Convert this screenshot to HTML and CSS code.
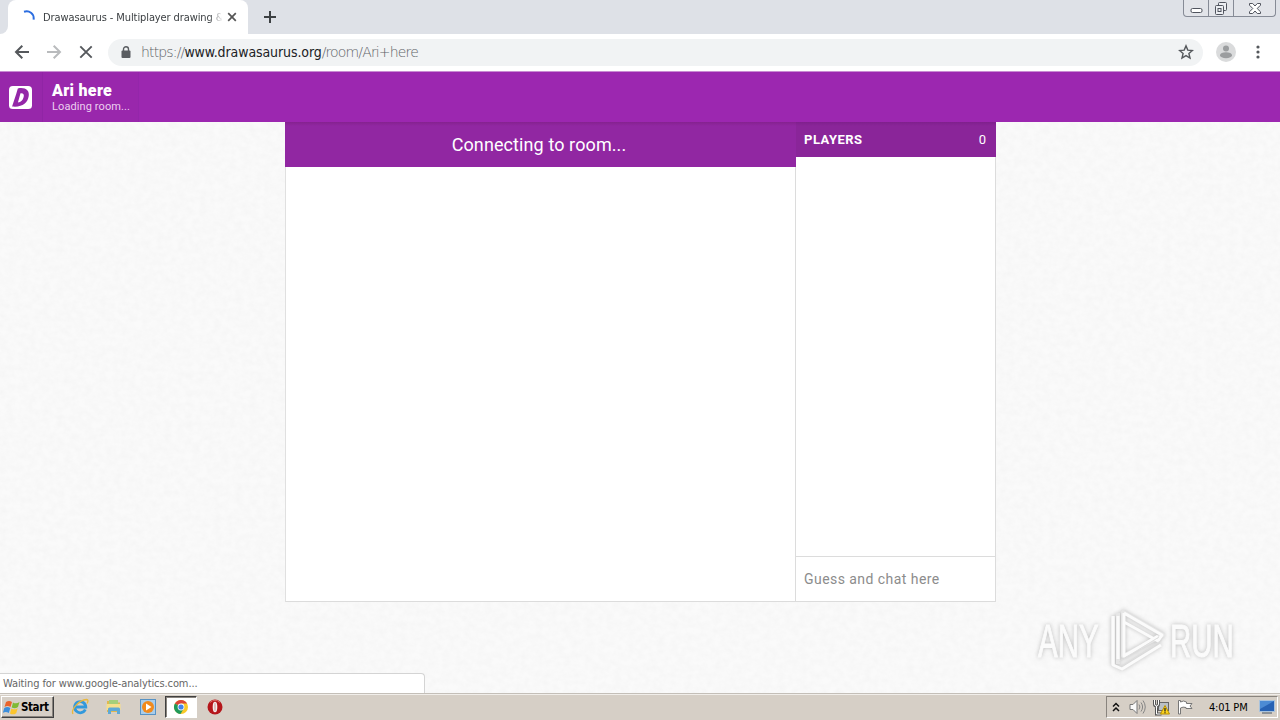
FILE: index.html
```
<!DOCTYPE html>
<html lang="en">
<head>
  <meta charset="utf-8">
  <title>Drawasaurus - Multiplayer drawing &amp; guessing game</title>
  <link rel="stylesheet" href="styles.css">
</head>
<body>
  <div class="tabstrip">
    <div class="prev_tab"></div>
    <div class="tab">
      <svg class="spinner" width="14" height="14" viewBox="0 0 14 14"><path d="M2 1.800C7 .2 12.400 3.200 11.600 9.600" fill="none" stroke="#2b6de0" stroke-width="2"/></svg>
      <span class="tab_title">Drawasaurus - Multiplayer drawing &amp;</span>
      <svg class="tab_close" width="10" height="10" viewBox="0 0 10 10"><path d="M1.200 1.200l7.600 7.600M8.800 1.200L1.200 8.800" stroke="#555" stroke-width="1.700"/></svg>
    </div>
    <svg class="new_tab" width="14" height="14" viewBox="0 0 14 14"><path d="M7 1v12M1 7h12" stroke="#3c4043" stroke-width="2"/></svg>
    <div class="win_buttons">
      <span class="win_btn min"><svg width="13" height="15" viewBox="0 0 13 15"><rect x="1" y="7.500" width="11" height="4" rx="1.500" fill="#fff" stroke="#50545e"/></svg></span>
      <span class="win_btn max"><svg width="15" height="15" viewBox="0 0 15 15"><g fill="#eceef2" stroke="#50545e"><rect x="4.500" y="1.500" width="8" height="8" rx="1"/><rect x="1.500" y="4.500" width="8" height="9" rx="1"/><rect x="4" y="7.500" width="3" height="3"/></g></svg></span>
      <span class="win_btn close"><svg width="14" height="13" viewBox="0 0 14 13"><path d="M1.500 1.500h3.200L7 4l2.300-2.500h3.200v1.700L9.200 6.500l3.300 3.300v1.700H9.300L7 9l-2.300 2.500H1.500V9.800l3.300-3.300-3.300-3.300z" fill="#fff" stroke="#50545e"/></svg></span>
    </div>
  </div>

  <div class="toolbar">
    <svg class="nav" width="16" height="16" viewBox="0 0 16 16"><path d="M15 8H2.200M8.300 1.700L2 8l6.300 6.300" fill="none" stroke="#55585c" stroke-width="2"/></svg>
    <svg class="nav" width="16" height="16" viewBox="0 0 16 16"><path d="M1 8h12.800M7.700 1.700L14 8l-6.300 6.300" fill="none" stroke="#b9bbbd" stroke-width="2"/></svg>
    <svg class="nav" width="16" height="16" viewBox="0 0 16 16"><path d="M2.300 2.300l11.400 11.400M13.700 2.300L2.300 13.700" stroke="#55585c" stroke-width="1.900"/></svg>
    <div class="omnibox">
      <svg class="lock" width="10" height="13" viewBox="0 0 10 13"><rect x=".5" y="4.500" width="9" height="7.500" rx="1" fill="#5a5d61"/><path d="M2.500 5V3.200a2.500 2.500 0 0 1 5 0V5" fill="none" stroke="#5a5d61" stroke-width="1.400"/></svg>
      <span class="url">https://<b>www.drawasaurus.org</b>/room/Ari+here</span>
      <svg class="star" width="16" height="16" viewBox="0 0 16 16"><path d="M8 1.900l1.800 4.200 4.600.4-3.500 3 1.100 4.500L8 11.600 4 14l1.100-4.500-3.500-3 4.600-.4z" fill="none" stroke="#55585c" stroke-width="1.400"/></svg>
    </div>
    <svg class="avatar" width="20" height="20" viewBox="0 0 20 20"><circle cx="10" cy="10" r="10" fill="#dadbdc"/><circle cx="10" cy="6.600" r="3" fill="#9b9d9f"/><ellipse cx="10" cy="13.200" rx="6" ry="3" fill="#9b9d9f"/></svg>
    <svg class="dots" width="4" height="14" viewBox="0 0 4 14"><g fill="#55585c"><circle cx="2" cy="2" r="1.600"/><circle cx="2" cy="7" r="1.600"/><circle cx="2" cy="12" r="1.600"/></g></svg>
  </div>

  <div class="header">
    <div class="logo">
      <svg width="23" height="23" viewBox="0 0 24 24"><rect width="24" height="24" rx="4" fill="#fff"/><path d="M9.200 2.500C17 1 21.600 4.400 20.600 10.500 19.500 18 13.500 22.500 3.200 21.400L5.100 15.600 7.600 8.200z" fill="#9427a8"/><path d="M12 7.500C15 7.200 16 8.800 15.300 11.500 14.500 14.800 12.500 16.800 9.300 17.200z" fill="#fff"/></svg>
    </div>
    <div class="room">
      <div class="room_name">Ari here</div>
      <div class="room_status">Loading room...</div>
    </div>
  </div>

  <div class="page">
    <!-- paper grain behind the game -->
    <svg class="paper" width="1280" height="571">
      <filter id="grain" x="0" y="0" width="100%" height="100%">
        <feTurbulence type="fractalNoise" baseFrequency=".14 .16" numOctaves="4" seed="6" result="n"/>
        <feColorMatrix in="n" type="matrix" values="0 0 0 0 .4  0 0 0 0 .4  0 0 0 0 .4  .09 0 0 0 -.025"/>
      </filter>
      <rect width="1280" height="571" filter="url(#grain)"/>
    </svg>
    <div class="game">
      <div class="board">
        <div class="board_title">Connecting to room...</div>
      </div>
      <div class="side">
        <div class="players"><span class="players_label">PLAYERS</span><span class="players_count">0</span></div>
        <div class="chat"></div>
        <div class="guess">Guess and chat here</div>
      </div>
    </div>

    <div class="watermark">
      <span class="any">ANY</span>
      <svg width="62" height="66" viewBox="0 0 62 66">
        <g fill="none" stroke-linejoin="round">
          <path d="M9 8v49M14 5v51M19 4v44L59 27z" stroke="#e6e6e6" stroke-width="4"/>
          <path d="M9 8v49l9 4 39-24M14 8v43M20 5v43l34-20M20 5l38 22-4 6-34-19" stroke="#fbfbfb" stroke-width="3"/>
          <path d="M15 54l40-25M18 58l40-26" stroke="#dedede" stroke-width="1"/>
        </g>
      </svg>
      <span class="run">RUN</span>
    </div>
    <div class="status">Waiting for www.google-analytics.com...</div>
  </div>

  <div class="taskbar">
    <div class="start">
      <svg width="18" height="17" viewBox="0 0 18 17"><path d="M3 3c2-1.500 4-1.500 6 0L7.500 8c-2-1.300-4-1.300-6 0z" fill="#e9642c"/><path d="M10 3.500c2 1.200 4.200 1.200 6.500-.5L15 8c-2.200 1.500-4.300 1.500-6.300.4z" fill="#7fba35"/><path d="M1.300 9c2-1.300 4-1.300 6 0l-1.500 5c-2-1.300-4-1.300-6 0z" fill="#3c8edb"/><path d="M8.400 9.500c2 1.200 4 1.200 6.300-.3l-1.500 5c-2.200 1.500-4.200 1.500-6.200.3z" fill="#fbc52d"/></svg>
      <span>Start</span>
    </div>
    <div class="task">
      <svg width="18" height="18" viewBox="0 0 18 18"><path d="M14.300 11.500A5.600 5.600 0 1 1 14.800 9H5" fill="none" stroke="#3299dc" stroke-width="2.800"/><path d="M2 16C-.5 12 8 2 15.500 1.500c2 0 1.800 2 .5 4" fill="none" stroke="#e9b73c" stroke-width="1.300"/></svg>
    </div>
    <div class="task">
      <svg width="18" height="18" viewBox="0 0 18 18"><path d="M2 3h5l1 1.500h7V14H2z" fill="#e0b850"/><path d="M4 2h9v5H4z" fill="#a5cf7a"/><path d="M1.500 6h14v6h-14z" fill="#f6df8c"/><path d="M3 16v-5q0-1.500 1.500-1.500h9Q15 9.500 15 11v5h-3v-3H6v3z" fill="#5fa9d6"/></svg>
    </div>
    <div class="task">
      <svg width="18" height="18" viewBox="0 0 18 18"><rect x="1.500" y="1.500" width="15" height="15" fill="#a9cdea" stroke="#5792c4"/><circle cx="9" cy="9" r="6" fill="#f18a1c"/><path d="M7 5.500l5.500 3.500L7 12.500z" fill="#fff"/></svg>
    </div>
    <div class="task active">
      <svg width="16" height="16" viewBox="0 0 16 16"><circle cx="8" cy="8" r="7" fill="#f9c928"/><path d="M8 8L1.900 4.500A7 7 0 0 1 14.100 4.500H8z" fill="#dc4437"/><path d="M8 8L1.900 4.500A7 7 0 0 0 7.500 15l3-5z" fill="#20995a"/><circle cx="8" cy="8" r="3.400" fill="#fff"/><circle cx="8" cy="8" r="2.600" fill="#4383ea"/></svg>
    </div>
    <div class="task">
      <svg width="16" height="16" viewBox="0 0 16 16"><circle cx="8" cy="8" r="7.500" fill="#b5161b"/><path d="M3 3.500Q8-1 13 3.500" fill="none" stroke="#dc6a65"/><ellipse cx="8" cy="8" rx="2.300" ry="5.300" fill="#f5eeee"/><ellipse cx="8" cy="8" rx=".8" ry="4.400" fill="#d9b4b1"/></svg>
    </div>
    <div class="tray">
      <svg width="8" height="11" viewBox="0 0 8 11"><path d="M1 4.500l3-3 3 3M1 9l3-3 3 3" fill="none" stroke="#111" stroke-width="1.500"/></svg>
      <svg class="sound" width="17" height="16" viewBox="0 0 17 16"><path d="M1 5.500h3l4-4v13l-4-4H1z" fill="#f9f9f9" stroke="#777"/><path d="M10 5.500q1.800 2.500 0 5M12 3.500q3.200 4.500 0 9M14 1.500q4.500 6.500 0 13" fill="none" stroke="#858585"/></svg>
      <svg class="net" width="18" height="17" viewBox="0 0 18 17"><rect x="5.500" y="3.500" width="10" height="8" fill="#bac0c5" stroke="#666"/><path d="M1.500 1v4q0 2 2 2t2-2V1M3.500 7v8h5" fill="none" stroke="#555" stroke-width="3"/><path d="M1.500 1v4q0 2 2 2t2-2V1M3.500 7v8h5" fill="none" stroke="#fff"/><path d="M12 6.500l4.500 8.500h-9z" fill="#ffd51c" stroke="#b99000"/><path d="M12 9v3.500M12 13.200v1" stroke="#222" stroke-width="1.300"/></svg>
      <svg class="flag" width="17" height="16" viewBox="0 0 17 16"><path d="M1.500 15V1.500h2V3q3-2 6 0v1.500h5.500l-2 2.500 2 2.500h-6V8.500q-3-1-5.500.5v6z" fill="#fff" stroke="#777"/></svg>
      <span class="clock">4:01 PM</span>
      <svg class="desk" width="16" height="14" viewBox="0 0 16 14"><rect x=".5" y=".5" width="15" height="11" fill="#2762b4" stroke="#a9c3dd"/><path d="M1 1h14L1 9z" fill="#4c8bd4"/><path d="M3 13h10" stroke="#456"/></svg>
    </div>
  </div>
</body>
</html>
```
FILE: styles.css
```
* {
  box-sizing: border-box;
}
body {
  margin: 0;
  width: 1280px;
  height: 720px;
  overflow: hidden;
  display: flex;
  flex-direction: column;
  font-family: "DejaVu Sans Condensed", "DejaVu Sans", sans-serif;
  font-size: 11px;
}
svg {
  display: block;
  flex: none;
}

/* browser */
.tabstrip {
  height: 34px;
  background: #dee1e7;
  display: flex;
  flex: none;
}
.prev_tab {
  width: 8px;
  background: #dee1e7;
  border-bottom-right-radius: 8px;
  box-shadow: 0 8px 0 #fff;
}
.tab {
  width: 240px;
  height: 34px;
  background: #fff;
  border-radius: 8px 8px 0 0;
  display: flex;
  align-items: center;
  padding-left: 14px;
}
.spinner {
  margin-top: -1px;
}
.tab_title {
  width: 179px;
  margin-left: 7px;
  white-space: nowrap;
  color: #3c4043;
  letter-spacing: -0.1px;
  -webkit-mask-image: linear-gradient(90deg, #000 166px, transparent 180px);
}
.tab_close {
  margin-left: 5px;
}
.new_tab {
  margin: 10px 0 0 15px;
}
.win_buttons {
  display: flex;
  height: 17px;
  margin: 0 4px 0 auto;
  border: 1px solid #868b96;
  border-top: 0;
  border-radius: 0 0 4px 4px;
  background: #e2e4e9;
}
.win_btn {
  display: flex;
  justify-content: center;
  align-items: center;
}
.min {
  width: 24px;
}
.max {
  width: 26px;
  border-left: 1px solid #868b96;
  border-right: 1px solid #868b96;
}
.close {
  width: 41px;
}
.toolbar {
  height: 37px;
  flex: none;
  display: flex;
  align-items: center;
  padding: 0 20px 0 14px;
  background: #fff;
}
.toolbar > svg {
  position: relative;
  top: -1px;
}
.nav {
  margin-right: 16px;
}
.omnibox {
  width: 1095px;
  height: 27px;
  margin: -1px 0 0 -2px;
  border-radius: 14px;
  background: #f1f3f4;
  display: flex;
  align-items: center;
  padding: 0 9px 0 13px;
}
.url {
  margin-left: 10px;
  font-family: "DejaVu Sans Light", "DejaVu Sans", sans-serif;
  font-weight: 200;
  font-size: 14px;
  color: #5f6368;
  letter-spacing: -0.85px;
}
.url b {
  font-family: "DejaVu Sans Condensed", sans-serif;
  font-weight: normal;
  color: #202124;
  letter-spacing: -0.1px;
}
.star {
  margin-left: auto;
}
.avatar {
  margin-left: 13px;
}
.dots {
  margin-left: auto;
}

/* room header */
.header {
  height: 51px;
  flex: none;
  display: flex;
  background: #9c27b0;
  border-top: 1px solid #c98bd3;
  color: #fff;
}
.logo {
  width: 43px;
  padding: 14px 0 0 9px;
  background: #9727aa;
  border-right: 1px solid #9025a5;
}
.room {
  width: 96px;
  padding: 10px 0 0 9px;
  border-right: 1px solid #9426aa;
  background: #9927ac;
  white-space: nowrap;
}
.room_name {
  font: 900 16px/18px Roboto, sans-serif;
  letter-spacing: 0.3px;
}
.room_status {
  font: 11px/13px Roboto, sans-serif;
  color: #ecd0f0;
  letter-spacing: 0.1px;
}

/* game */
.page {
  position: relative;
  height: 571px;
  flex: none;
  background: #fafafa;
}
.paper {
  position: absolute;
  left: 0;
  top: 0;
}
.game {
  position: relative;
  width: 711px;
  height: 480px;
  margin-left: 285px;
  display: flex;
  background: #fff;
}
.board {
  width: 511px;
  border-left: 1px solid #e0e0e0;
  border-bottom: 1px solid #dcdcdc;
}
.board_title {
  position: relative;
  z-index: 1;
  height: 45px;
  margin-left: -1px;
  padding-right: 3px;
  background: linear-gradient(#85228f, #9127a2 4px);
  color: #fff;
  text-align: center;
  font: 18px/45px Roboto, sans-serif;
  letter-spacing: 0.1px;
}
.side {
  width: 200px;
  display: flex;
  flex-direction: column;
}
.players {
  height: 35px;
  display: flex;
  justify-content: space-between;
  padding: 0 10px 0 8px;
  background: linear-gradient(#7f208c, #8a2599 4px);
  color: #fff;
  font: 13px/35px Roboto, sans-serif;
}
.players_label {
  font-weight: bold;
  letter-spacing: 0.5px;
}
.chat {
  flex: 1;
  border: 1px solid #dcdcdc;
  border-top: 0;
  margin-left: -1px;
}
.guess {
  height: 45px;
  margin-left: -1px;
  padding-left: 8px;
  border: 1px solid #dcdcdc;
  border-top: 0;
  color: #8c8c8c;
  font: 14px/44px Roboto, sans-serif;
  letter-spacing: 0.45px;
}
.watermark {
  position: absolute;
  left: 1038px;
  top: 486px;
  display: flex;
  align-items: center;
  font: 46px/66px "Liberation Sans", sans-serif;
  color: #fbfbfb;
  -webkit-text-stroke: 1px #fbfbfb;
  filter: drop-shadow(0 0 2px #bbb);
}
.any,
.run {
  width: 66px;
  transform: scaleX(0.64);
  transform-origin: 0 50%;
}
.run {
  margin-left: 4px;
}
.status {
  position: absolute;
  left: 0;
  bottom: 0;
  width: 425px;
  height: 20px;
  padding-left: 3px;
  border: 1px solid #d4d4d4;
  border-left: 0;
  border-bottom: 0;
  border-radius: 0 4px 0 0;
  background: #fff;
  color: #666;
  line-height: 19px;
  letter-spacing: -0.1px;
}

/* taskbar */
.taskbar {
  height: 27px;
  flex: none;
  display: flex;
  align-items: center;
  background: #d6cfc6;
  border-top: 1px solid #c4bfb8;
  box-shadow: inset 0 1px #f1eeea;
  padding: 0 2px 0 1px;
}
.start {
  width: 53px;
  height: 22px;
  margin-right: 10px;
  display: flex;
  align-items: center;
  border: 1px solid;
  border-color: #fff #404040 #404040 #fff;
  box-shadow: inset -1px -1px #89847e;
  padding-left: 1px;
  font-weight: bold;
  color: #000;
}
.start span {
  font-size: 11.5px;
  letter-spacing: -0.4px;
}
.task {
  width: 32px;
  height: 22px;
  margin-right: 2px;
  display: flex;
  align-items: center;
  justify-content: center;
}
.active {
  margin-left: -1px;
  background: #fff;
  border: 1px solid;
  border-color: #404040 #fff #fff #404040;
  box-shadow: inset 1px 1px #89847e;
}
.tray {
  width: 172px;
  height: 22px;
  margin-left: auto;
  display: flex;
  align-items: center;
  padding-left: 5px;
  border: 1px solid;
  border-color: #89847e #fff #fff #89847e;
}
.sound {
  margin-left: 9px;
}
.net {
  margin-left: 7px;
}
.flag {
  margin-left: 6px;
}
.clock {
  width: 40px;
  margin: 0 10px 0 15px;
  white-space: nowrap;
  letter-spacing: -0.2px;
}
```
